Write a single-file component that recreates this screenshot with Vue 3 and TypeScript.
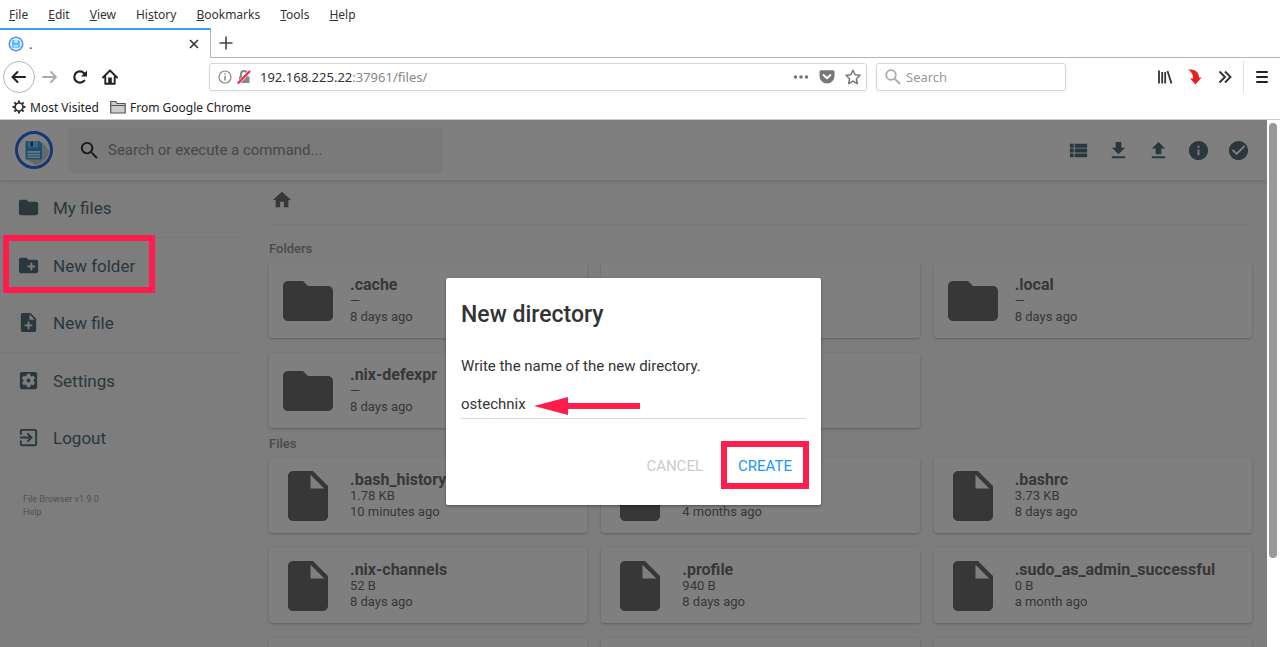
<script setup lang="ts">
import { ref } from 'vue'

interface Entry {
  name: string
  size: string
  modified: string
}

const menus: [string, string, string][] = [
  ['', 'F', 'ile'],
  ['', 'E', 'dit'],
  ['', 'V', 'iew'],
  ['Hi', 's', 'tory'],
  ['', 'B', 'ookmarks'],
  ['', 'T', 'ools'],
  ['', 'H', 'elp'],
]

const icons = {
  folder: 'M10 4H4c-1.1 0-1.99.9-1.99 2L2 18c0 1.1.9 2 2 2h16c1.1 0 2-.9 2-2V8c0-1.1-.9-2-2-2h-8l-2-2z',
  newFolder: 'M20 6h-8l-2-2H4c-1.11 0-1.99.89-1.99 2L2 18c0 1.11.89 2 2 2h16c1.11 0 2-.89 2-2V8c0-1.11-.89-2-2-2zm-1 8h-3v3h-2v-3h-3v-2h3V9h2v3h3v2z',
  newFile: 'M14 2H6c-1.1 0-1.99.9-1.99 2L4 20c0 1.1.89 2 1.99 2H18c1.1 0 2-.9 2-2V8l-6-6zm2 14h-3v3h-2v-3H8v-2h3v-3h2v3h3v2zm-3-7V3.5L18.5 9H13z',
  settings: 'M12 10c-1.1 0-2 .9-2 2s.9 2 2 2 2-.9 2-2-.9-2-2-2zm7-7H5c-1.11 0-2 .9-2 2v14c0 1.1.89 2 2 2h14c1.11 0 2-.9 2-2V5c0-1.1-.89-2-2-2zm-1.75 9c0 .23-.02.46-.05.68l1.48 1.16c.13.11.17.3.08.45l-1.4 2.42c-.09.15-.27.21-.43.15l-1.74-.7c-.36.28-.76.51-1.18.69l-.26 1.85c-.03.17-.18.3-.35.3h-2.8c-.17 0-.32-.13-.35-.29l-.26-1.85c-.43-.18-.82-.41-1.18-.69l-1.74.7c-.16.06-.34 0-.43-.15l-1.4-2.42c-.09-.15-.05-.34.08-.45l1.48-1.16c-.03-.23-.05-.46-.05-.69 0-.23.02-.46.05-.68l-1.48-1.16c-.13-.11-.17-.3-.08-.45l1.4-2.42c.09-.15.27-.21.43-.15l1.74.7c.36-.28.76-.51 1.18-.69l.26-1.85c.03-.17.18-.3.35-.3h2.8c.17 0 .32.13.35.29l.26 1.85c.43.18.82.41 1.18.69l1.74-.7c.16-.06.34 0 .43.15l1.4 2.42c.09.15.05.34-.08.45l-1.48 1.16c.03.23.05.46.05.69z',
  logout: 'M10.09 15.59L11.5 17l5-5-5-5-1.41 1.41L12.67 11H3v2h9.67l-2.58 2.59zM19 3H5c-1.11 0-2 .9-2 2v4h2V5h14v14H5v-4H3v4c0 1.1.89 2 2 2h14c1.1 0 2-.9 2-2V5c0-1.1-.9-2-2-2z',
  file: 'M6 2c-1.1 0-1.99.9-1.99 2L4 20c0 1.1.89 2 1.99 2H18c1.1 0 2-.9 2-2V8l-6-6H6zm7 7V3.5L18.5 9H13z',
  home: 'M10 20v-6h4v6h5v-8h3L12 3 2 12h3v8z',
  search: 'M15.5 14h-.79l-.28-.27C15.41 12.59 16 11.11 16 9.5 16 5.91 13.09 3 9.5 3S3 5.91 3 9.5 5.91 16 9.5 16c1.61 0 3.09-.59 4.23-1.57l.27.28v.79l5 4.99L20.49 19l-4.99-5zm-6 0C7.01 14 5 11.99 5 9.5S7.01 5 9.5 5 14 7.01 14 9.5 11.99 14 9.5 14z',
}

const sidebar = [
  [{ label: 'My files', icon: icons.folder }],
  [
    { label: 'New folder', icon: icons.newFolder },
    { label: 'New file', icon: icons.newFile },
  ],
  [
    { label: 'Settings', icon: icons.settings },
    { label: 'Logout', icon: icons.logout },
  ],
]

const actions = [
  { label: 'Switch view', icon: 'M3 9h4V5H3v4zm0 5h4v-4H3v4zm0 5h4v-4H3v4zm5-5h13v-4H8v4zm0 5h13v-4H8v4zM8 5v4h13V5H8z' },
  { label: 'Download', icon: 'M19 9h-4V3H9v6H5l7 7 7-7zM5 18v2h14v-2H5z' },
  { label: 'Upload', icon: 'M9 16h6v-6h4l-7-7-7 7h4zm-4 2h14v2H5z' },
  { label: 'Info', icon: 'M12 2C6.48 2 2 6.48 2 12s4.48 10 10 10 10-4.48 10-10S17.52 2 12 2zm1 15h-2v-6h2v6zm0-8h-2V7h2v2z' },
  { label: 'Select', icon: 'M12 2C6.48 2 2 6.48 2 12s4.48 10 10 10 10-4.48 10-10S17.52 2 12 2zm-2 15l-5-5 1.41-1.41L10 14.17l7.59-7.59L19 8l-9 9z' },
]

const folders: Entry[] = [
  { name: '.cache', size: '—', modified: '8 days ago' },
  { name: '.gnupg', size: '—', modified: '8 days ago' },
  { name: '.local', size: '—', modified: '8 days ago' },
  { name: '.nix-defexpr', size: '—', modified: '8 days ago' },
  { name: '.ssh', size: '—', modified: '8 days ago' },
]

const files: Entry[] = [
  { name: '.bash_history', size: '1.78 KB', modified: '10 minutes ago' },
  { name: '.bash_logout', size: '220 B', modified: '4 months ago' },
  { name: '.bashrc', size: '3.73 KB', modified: '8 days ago' },
  { name: '.nix-channels', size: '52 B', modified: '8 days ago' },
  { name: '.profile', size: '940 B', modified: '8 days ago' },
  { name: '.sudo_as_admin_successful', size: '0 B', modified: 'a month ago' },
  { name: '.viminfo', size: '1.2 KB', modified: 'a month ago' },
  { name: '.wget-hsts', size: '180 B', modified: 'a month ago' },
  { name: 'notes.txt', size: '64 B', modified: 'a month ago' },
]

const groups = [
  { title: 'Folders', icon: icons.folder, entries: folders },
  { title: 'Files', icon: icons.file, entries: files },
]

const directoryName = ref('ostechnix')
</script>

<template>
  <div class="window">
    <nav class="menubar" aria-label="Menu bar">
      <button v-for="m in menus" :key="m.join('')" type="button">{{ m[0] }}<u>{{ m[1] }}</u>{{ m[2] }}</button>
    </nav>

    <div class="tabs">
      <div class="tab">
        <svg width="16" height="16" viewBox="0 0 38 38" aria-hidden="true">
          <circle cx="19" cy="19" r="16" fill="#e4f0ff" stroke="#5b96f5" stroke-width="4" />
          <path d="M10 10h15l3 3v15H10z" fill="#45b5f3" />
          <path d="M15 10h8v6h-8zM13 21h12v2H13zM13 25h12v2H13z" fill="#d3eefd" />
        </svg>
        <span class="tab-title">.</span>
        <button type="button" aria-label="Close tab">
          <svg width="12" height="12" viewBox="0 0 12 12"><path d="M2 2l8 8M10 2l-8 8" stroke="#333" stroke-width="1.6" /></svg>
        </button>
      </div>
      <button class="new-tab" type="button" aria-label="New tab">
        <svg width="14" height="14" viewBox="0 0 14 14"><path d="M7 0.5v13M0.5 7h13" stroke="#444" stroke-width="1.6" /></svg>
      </button>
    </div>

    <div class="toolbar">
      <button class="back" type="button" aria-label="Back">
        <svg width="16" height="16" viewBox="0 0 16 16" fill="none" stroke="#222" stroke-width="2" stroke-linecap="round" stroke-linejoin="round"><path d="M14 8H1.500M6.500 3L1.500 8l5 5" /></svg>
      </button>
      <button class="tool" type="button" aria-label="Forward">
        <svg width="16" height="16" viewBox="0 0 16 16" fill="none" stroke="#aaa" stroke-width="1.8" stroke-linecap="round" stroke-linejoin="round"><path d="M1 8h13M9 3l5 5-5 5" /></svg>
      </button>
      <button class="tool" type="button" aria-label="Reload">
        <svg width="16" height="16" viewBox="0 0 16 16"><path d="M12.2 11.6A5.6 5.6 0 1 1 12 4.2" fill="none" stroke="#222" stroke-width="2.2" stroke-linecap="round" /><path d="M15 1.500v6H9z" fill="#222" /></svg>
      </button>
      <button class="tool" type="button" aria-label="Home">
        <svg width="16" height="16" viewBox="0 0 16 16"><path d="M1 8.5L8 1.5l7 7M3.3 8v6.7h9.4V8" fill="none" stroke="#222" stroke-width="1.900" stroke-linecap="round" stroke-linejoin="round" /><path d="M6.2 8.5h3.6V15H6.2z" fill="#222" /></svg>
      </button>

      <div class="field url">
        <svg width="14" height="14" viewBox="0 0 14 14" aria-hidden="true"><circle cx="7" cy="7" r="6" fill="none" stroke="#888" stroke-width="1.2" /><path d="M7 6v4.4M7 3.4v1.4" stroke="#888" stroke-width="1.5" /></svg>
        <svg width="14" height="14" viewBox="0 0 14 14" aria-hidden="true"><path d="M4 7V4a3 3 0 0 1 6 0v3" fill="none" stroke="#888" stroke-width="2" /><path d="M2 6.5h10.5V13H2z" fill="#888" /><path d="M0.5 14L13.5 0.5" stroke="#fff" stroke-width="3" /><path d="M0.8 13.5L13 1" stroke="#f0223f" stroke-width="2" /></svg>
        <span class="address">192.168.225.22<span>:37961/files/</span></span>
        <svg width="16" height="16" viewBox="0 0 16 16" fill="#777" aria-hidden="true"><circle cx="2.5" cy="8" r="1.8" /><circle cx="8" cy="8" r="1.8" /><circle cx="13.5" cy="8" r="1.8" /></svg>
        <svg width="16" height="16" viewBox="0 0 16 16" aria-hidden="true"><path d="M2 1.2h12a1.5 1.5 0 0 1 1.5 1.5V7a7.5 7.5 0 0 1-15 0V2.700A1.500 1.500 0 0 1 2 1.200z" fill="#777" /><path d="M4.500 6L8 9.300 11.500 6" fill="none" stroke="#fff" stroke-width="1.900" stroke-linecap="round" stroke-linejoin="round" /></svg>
        <svg width="16" height="16" viewBox="0 0 16 16" aria-hidden="true"><path d="M8 1.200l2.100 4.500 4.900.6-3.600 3.400.9 4.900L8 12.200l-4.300 2.400.9-4.900L1 6.300l4.900-.6z" fill="none" stroke="#777" stroke-width="1.500" stroke-linejoin="round" /></svg>
      </div>

      <label class="field find">
        <svg width="16" height="16" viewBox="0 0 16 16" aria-hidden="true"><circle cx="6" cy="6" r="4.800" fill="none" stroke="#aaa" stroke-width="1.800" /><path d="M9.600 9.600L15 15" stroke="#aaa" stroke-width="2" /></svg>
        <input type="text" placeholder="Search" aria-label="Search the web" />
      </label>

      <div class="extras">
        <button type="button" aria-label="Library">
          <svg width="16" height="16" viewBox="0 0 16 16" fill="none" stroke="#333" stroke-width="1.800"><path d="M2 1.500v13M5.200 3v11.500M8.200 3v11.500M10.500 2l4 12.500" /></svg>
        </button>
        <button type="button" aria-label="Downloads">
          <svg width="16" height="16" viewBox="0 0 16 16"><path d="M1 .6c6.500-.6 10.800 2 11 7.900h2.500L8.500 15.600 3 9.500h2.900C6.300 5.500 4.500 2.800 1 .6z" fill="#e8201f" /></svg>
        </button>
        <button type="button" aria-label="More tools">
          <svg width="16" height="16" viewBox="0 0 16 16" fill="none" stroke="#333" stroke-width="1.900"><path d="M2.500 2.500L8 8l-5.500 5.500M8 2.500L13.500 8 8 13.500" /></svg>
        </button>
      </div>
      <button class="burger" type="button" aria-label="Open menu">
        <svg width="16" height="16" viewBox="0 0 16 16" stroke="#222" stroke-width="2" stroke-linecap="round"><path d="M3 3h10M3 8h10M3 13h10" /></svg>
      </button>
    </div>

    <div class="bookmarks">
      <a href="#most-visited">
        <svg width="14" height="14" viewBox="0 0 14 14" aria-hidden="true"><circle cx="7" cy="7" r="4" fill="none" stroke="#333" stroke-width="1.700" /><path d="M7 .5v2.500M7 11v2.500M.5 7h2.500M11 7h2.500M2.400 2.400l1.800 1.800M9.800 9.800l1.800 1.800M11.600 2.400L9.800 4.200M4.200 9.800l-1.800 1.800" stroke="#333" stroke-width="2" /></svg>
        Most Visited
      </a>
      <a href="#from-google-chrome">
        <svg width="16" height="14" viewBox="0 0 16 14" aria-hidden="true"><path d="M.7 13V1.500h5l1.500 2h8V13H.7z" fill="#ccc" stroke="#555" stroke-width="1.200" stroke-linejoin="round" /><path d="M1 5.500h14" stroke="#555" /></svg>
        From Google Chrome
      </a>
    </div>

    <div class="page">
      <div class="app">
        <header class="header">
          <svg class="logo" width="38" height="38" viewBox="0 0 38 38" aria-hidden="true">
            <circle cx="19" cy="19" r="17.500" fill="#fff" />
            <path d="M27 11l7 8.500A16 16 0 0 1 20 34l-8.500-6z" fill="#cfcfcf" />
            <circle cx="19" cy="19" r="17.500" fill="none" stroke="#2c6fe8" stroke-width="3" />
            <path d="M11 10h13.500l2.500 2.500V27.500a1 1 0 0 1-1 1H11.500a1 1 0 0 1-1-1v-17z" fill="#2ea5e4" />
            <path d="M13 10h10v6.500H13z" fill="#8fc4e8" />
            <path d="M15.500 10.500h2.500v5h-2.500z" fill="#15507e" />
            <path d="M12.500 20h12.500v7H12.500z" fill="#d5ecfa" />
            <path d="M12.500 22.300h12.500M12.500 25h12.500" stroke="#2ea5e4" />
          </svg>
          <label class="command">
            <svg width="23" height="23" viewBox="0 0 24 24" fill="#333" aria-hidden="true"><path :d="icons.search" /></svg>
            <input type="text" placeholder="Search or execute a command..." aria-label="Search or execute a command" />
          </label>
          <div class="actions">
            <button v-for="a in actions" :key="a.label" type="button" :aria-label="a.label">
              <svg width="23" height="23" viewBox="0 0 24 24" fill="currentColor"><path :d="a.icon" /></svg>
            </button>
          </div>
        </header>

        <div class="body">
          <nav class="sidebar" aria-label="Files">
            <div v-for="(section, i) in sidebar" :key="i" class="section">
              <button v-for="item in section" :key="item.label" type="button">
                <svg width="23" height="23" viewBox="0 0 24 24" fill="currentColor" aria-hidden="true"><path :d="item.icon" fill-rule="evenodd" /></svg>
                {{ item.label }}
              </button>
            </div>
            <p class="credits">
              <span>File Browser v1.9.0</span>
              <a href="#help">Help</a>
            </p>
          </nav>

          <main class="listing">
            <div class="crumbs">
              <a href="#home" aria-label="Home"><svg width="22" height="22" viewBox="0 0 24 24" fill="currentColor"><path :d="icons.home" /></svg></a>
            </div>
            <section v-for="g in groups" :key="g.title">
              <h2>{{ g.title }}</h2>
              <div class="grid">
                <article v-for="e in g.entries" :key="e.name" class="card">
                  <svg width="60" height="60" viewBox="0 0 24 24" fill="currentColor" aria-hidden="true"><path :d="g.icon" /></svg>
                  <div>
                    <p class="name">{{ e.name }}</p>
                    <p>{{ e.size }}</p>
                    <p>{{ e.modified }}</p>
                  </div>
                </article>
              </div>
            </section>
          </main>
        </div>

        <div class="overlay">
          <form class="dialog" role="dialog" aria-labelledby="dialog-title" @submit.prevent>
            <h1 id="dialog-title">New directory</h1>
            <label for="directory">Write the name of the new directory.</label>
            <div class="entry">
              <input id="directory" v-model="directoryName" type="text" />
              <svg class="arrow" width="106" height="18" viewBox="0 0 106 18" aria-hidden="true"><path d="M0 9L34 0v6h72v6H34v6z" fill="#ff1d4d" /></svg>
            </div>
            <div class="buttons">
              <button class="cancel" type="button">CANCEL</button>
              <button class="create" type="submit">CREATE</button>
            </div>
          </form>
        </div>
        <div class="highlight" aria-hidden="true"></div>
      </div>
      <div class="scrollbar" aria-hidden="true"><div class="thumb"></div></div>
    </div>
  </div>
</template>

<style>
body {
  margin: 0;
  overflow: hidden;
}
</style>

<style scoped>
* {
  box-sizing: border-box;
}

.window {
  display: flex;
  flex-direction: column;
  height: 100vh;
  background: #fff;
  color: #333;
  font-family: "Noto Sans", sans-serif;
  font-size: 13px;
}

svg {
  display: block;
  flex: none;
}

button {
  padding: 0;
  border: 0;
  background: none;
  color: inherit;
  font: inherit;
  white-space: nowrap;
}

input {
  min-width: 0;
  padding: 0;
  border: 0;
  outline: 0;
  background: none;
  color: inherit;
  font: inherit;
}

a {
  color: inherit;
  text-decoration: none;
}

.menubar {
  display: flex;
  flex: none;
  gap: 20px;
  height: 28px;
  padding: 0 9px;
  font-size: 12px;
}

.tabs {
  display: flex;
  flex: none;
  height: 30px;
}

.tab {
  display: flex;
  align-items: center;
  gap: 5px;
  width: 211px;
  padding: 0 10px 0 8px;
  border-top: 2px solid #3a9fee;
  border-right: 1px solid #b5b5b5;
}

.tab-title {
  flex: 1;
}

.new-tab {
  display: flex;
  flex: 1;
  align-items: center;
  padding-left: 8px;
  border-bottom: 1px solid #b5b5b5;
}

.toolbar {
  display: flex;
  flex: none;
  align-items: center;
  height: 37px;
  padding: 0 11px 0 3px;
}

.back {
  display: grid;
  place-items: center;
  width: 32px;
  height: 32px;
  border: 1px solid #b5b5b5;
  border-radius: 50%;
}

.tool {
  display: grid;
  place-items: center;
  width: 30px;
  height: 32px;
}

.field {
  display: flex;
  align-items: center;
  height: 28px;
  border: 1px solid #d6d6d6;
  border-radius: 3px;
  box-shadow: 0 1px 3px rgba(0, 0, 0, 0.06);
}

.url {
  flex: 1;
  gap: 5px;
  margin-left: 84px;
  padding: 0 5px 0 8px;
}

.url svg:nth-of-type(n + 3) {
  margin-left: 5px;
}

.address {
  flex: 1;
  padding-left: 4px;
}

.address span {
  color: #888;
}

.find {
  gap: 5px;
  width: 190px;
  margin-left: 9px;
  padding: 0 8px;
}

.find input {
  flex: 1;
}

.find input::placeholder {
  color: #999;
  opacity: 1;
}

.extras {
  display: flex;
  gap: 14px;
  margin-left: 91px;
  padding-right: 10px;
}

.burger {
  display: grid;
  place-items: center;
  width: 26px;
  height: 32px;
  padding-left: 10px;
  border-left: 1px solid #e2e2e2;
}

.bookmarks {
  display: flex;
  flex: none;
  gap: 11px;
  align-items: center;
  height: 25px;
  padding: 0 12px;
  border-bottom: 1px solid #ccc;
  color: #222;
  font-size: 12px;
}

.bookmarks a {
  display: flex;
  gap: 4px;
  align-items: center;
}

.page {
  display: flex;
  flex: 1;
  min-height: 0;
  font-family: Roboto, sans-serif;
}

.app {
  position: relative;
  display: flex;
  flex: 1;
  flex-direction: column;
  min-width: 0;
  overflow: hidden;
  background: #fafafa;
}

.scrollbar {
  flex: none;
  width: 13px;
  height: 100%;
  padding: 3px 3px 0 2px;
  background: #fff;
}

.thumb {
  height: 83%;
  border-radius: 4px;
  background: #999;
}

.header {
  display: flex;
  flex: none;
  align-items: center;
  height: 60px;
  padding: 0 17px 0 15px;
  background: #fff;
  box-shadow: 0 1px 5px rgba(0, 0, 0, 0.14);
}

.command {
  display: flex;
  align-items: center;
  gap: 7px;
  width: 375px;
  height: 45px;
  margin-left: 15px;
  padding: 0 10px;
  border-radius: 3px;
  background: #f5f5f5;
  font-size: 15px;
}

.command input {
  flex: 1;
}

.command input::placeholder {
  color: #8f8f8f;
  opacity: 1;
}

.actions {
  display: flex;
  gap: 17px;
  margin-left: auto;
  color: #546e7a;
}

.body {
  display: flex;
  flex: 1;
  min-height: 0;
}

.sidebar {
  flex: none;
  width: 240px;
  color: #546e7a;
  font-size: 17px;
}

.section + .section {
  border-top: 1px solid #efefef;
}

.section button {
  display: flex;
  align-items: center;
  gap: 13px;
  width: 100%;
  height: 57px;
  padding: 0 17px 2px;
}

.credits {
  display: flex;
  flex-direction: column;
  margin: 26px 23px;
  color: #a5a5a5;
  font-size: 9px;
  line-height: 13px;
}

.listing {
  flex: 1;
  margin: 0 15px 0 29px;
  color: #6f6f6f;
}

.crumbs {
  height: 45px;
  padding: 9px 2px;
  border-bottom: 1px solid #efefef;
}

.crumbs a {
  display: inline-block;
}

h2 {
  margin: 0;
  padding: 0 0 5px;
  color: #959595;
  font-size: 13px;
  font-weight: 500;
  line-height: 18px;
}

section:first-of-type h2 {
  padding-top: 15px;
}

section + section h2 {
  padding-top: 7px;
}

.grid {
  display: grid;
  grid-template-columns: repeat(3, minmax(0, 1fr));
  gap: 15px 14px;
}

.card {
  display: flex;
  align-items: center;
  gap: 12px;
  height: 75px;
  padding: 0 9px;
  border-radius: 3px;
  background: #fff;
  box-shadow: 0 1px 3px rgba(0, 0, 0, 0.12), 0 1px 2px rgba(0, 0, 0, 0.12);
}

.card p {
  margin: 0;
  font-size: 13px;
  line-height: 16px;
}

.card .name {
  font-size: 16px;
  font-weight: 700;
  line-height: 17px;
}

.overlay {
  position: absolute;
  inset: 0;
  display: grid;
  place-items: center;
  padding-top: 15px;
  background: rgba(0, 0, 0, 0.5);
}

.dialog {
  width: 375px;
  padding: 20px 15px 16px;
  border-radius: 2px;
  background: #fff;
  box-shadow: 0 1px 3px rgba(0, 0, 0, 0.4);
  font-size: 15px;
}

.dialog h1 {
  margin: 0 0 25px;
  font-size: 23px;
  font-weight: 500;
  line-height: 33px;
}

.dialog label {
  display: block;
  line-height: 20px;
}

.entry {
  position: relative;
  margin-top: 14px;
}

.entry input {
  display: block;
  width: 100%;
  height: 29px;
  border-bottom: 1px solid #d8d8d8;
}

.arrow {
  position: absolute;
  top: 7px;
  left: 73px;
}

.buttons {
  display: flex;
  justify-content: flex-end;
  align-items: center;
  gap: 18px;
  margin: 22px -3px 0 0;
}

.cancel {
  padding-top: 2px;
  color: #ccc;
}

.create {
  width: 88px;
  height: 48px;
  padding-top: 2px;
  border: 6px solid #ff1d4d;
  color: #2196f3;
}

.highlight {
  position: absolute;
  top: 115px;
  left: 3px;
  width: 152px;
  height: 58px;
  border: 6px solid #ff1d4d;
}
</style>
